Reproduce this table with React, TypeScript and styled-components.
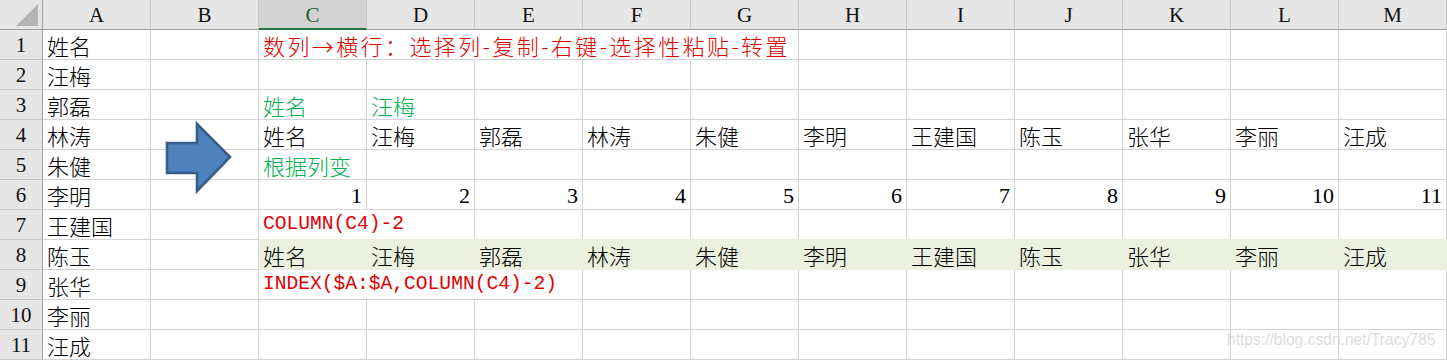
import React from "react";
import styled, { createGlobalStyle } from "styled-components";

const GlobalStyle = createGlobalStyle`
  html, body { margin: 0; padding: 0; background: #ffffff; }
  body { width: 1447px; height: 360px; overflow: hidden; }
`;

const CJK = `"Noto Sans CJK SC", "Noto Sans", sans-serif`;
const SERIF = `"Liberation Serif", "Noto Sans CJK SC", serif`;
const MONO = `"Liberation Mono", "Noto Sans CJK SC", monospace`;

const Sheet = styled.div`
  position: relative;
  display: grid;
  grid-template-columns: 43px repeat(13, 108px);
  grid-auto-rows: 30px;
  width: 1447px;
  height: 360px;
  overflow: hidden;
  background: #ffffff;
`;

const Corner = styled.div`
  box-sizing: border-box;
  background: #e6e6e6;
  border-right: 1px solid #9e9e9e;
  border-bottom: 1px solid #9e9e9e;
  display: flex;
  align-items: flex-end;
  justify-content: flex-end;
  padding: 0 3px 3px 0;
`;

const ColHeader = styled.div<{ $selected?: boolean }>`
  box-sizing: border-box;
  background: ${(p) => (p.$selected ? "#d2d2d2" : "#e6e6e6")};
  border-right: 1px solid #c6c6c6;
  border-bottom: ${(p) => (p.$selected ? "2px solid #217346" : "1px solid #9e9e9e")};
  color: ${(p) => (p.$selected ? "#1d5f3b" : "#111111")};
  font-family: ${SERIF};
  font-size: 21px;
  display: flex;
  align-items: center;
  justify-content: center;
  padding-top: ${(p) => (p.$selected ? "2px" : "1px")};
`;

const RowHeader = styled.div`
  box-sizing: border-box;
  background: #e6e6e6;
  border-right: 1px solid #9e9e9e;
  border-bottom: 1px solid #c6c6c6;
  color: #111111;
  font-family: ${SERIF};
  font-size: 21px;
  display: flex;
  align-items: center;
  justify-content: center;
  padding-top: 1px;
`;

type Tone = "black" | "red" | "green";
const toneColor: Record<Tone, string> = {
  black: "#000000",
  red: "#e00000",
  green: "#00b050",
};

const Cell = styled.div<{
  $tone: Tone;
  $mono?: boolean;
  $num?: boolean;
  $fill?: boolean;
  $span: number;
  $wide?: boolean;
}>`
  box-sizing: border-box;
  grid-column: span ${(p) => p.$span};
  border-right: 1px solid ${(p) => (p.$fill ? "#ebf1de" : "#d4d4d4")};
  border-bottom: 1px solid ${(p) => (p.$fill ? "#ebf1de" : "#d4d4d4")};
  background: ${(p) => (p.$fill ? "#ebf1de" : "transparent")};
  box-shadow: ${(p) => (p.$fill ? "0 -1px 0 #ebf1de" : "none")};
  color: ${(p) => toneColor[p.$tone]};
  font-family: ${(p) => (p.$mono ? MONO : p.$num ? SERIF : CJK)};
  font-size: ${(p) => (p.$mono ? "19.6px" : "22px")};
  font-weight: ${(p) => (p.$mono || p.$num ? 400 : 300)};
  letter-spacing: ${(p) => (p.$wide ? "2.4px" : "0")};
  white-space: nowrap;
  overflow: visible;
  display: flex;
  align-items: center;
  justify-content: ${(p) => (p.$num ? "flex-end" : "flex-start")};
  padding: ${(p) => (p.$num ? "2px 4px 0 0" : p.$mono ? "1px 0 0 4px" : "0 0 0 4px")};
  line-height: 1;
`;

const ArrowLayer = styled.svg`
  position: absolute;
  left: 160px;
  top: 118px;
  width: 80px;
  height: 80px;
  pointer-events: none;
`;

const Watermark = styled.div`
  position: absolute;
  left: 1227px;
  top: 331px;
  font-family: "Liberation Sans", Arial, sans-serif;
  font-size: 15.6px;
  color: rgba(205, 205, 205, 0.7);
  pointer-events: none;
  white-space: nowrap;
`;

type CellData = {
  text: string;
  tone?: Tone;
  mono?: boolean;
  num?: boolean;
  span?: number;
  wide?: boolean;
};

const COLS = ["A", "B", "C", "D", "E", "F", "G", "H", "I", "J", "K", "L", "M"];
const names = ["姓名", "汪梅", "郭磊", "林涛", "朱健", "李明", "王建国", "陈玉", "张华", "李丽", "汪成"];

type RowData = { cells: (CellData | null)[]; fill?: boolean };

const buildRows = (): RowData[] => {
  const rows: RowData[] = [];
  for (let r = 0; r < 11; r++) {
    const cells: (CellData | null)[] = new Array(13).fill(null);
    cells[0] = { text: names[r] };
    rows.push({ cells });
  }
  rows[0].cells[2] = {
    text: "数列→横行：选择列-复制-右键-选择性粘贴-转置",
    tone: "red",
    span: 5,
    wide: true,
  };
  rows[2].cells[2] = { text: "姓名", tone: "green" };
  rows[2].cells[3] = { text: "汪梅", tone: "green" };
  names.forEach((n, i) => {
    rows[3].cells[2 + i] = { text: n };
    rows[5].cells[2 + i] = { text: String(i + 1), num: true };
    rows[7].cells[2 + i] = { text: n };
  });
  rows[4].cells[2] = { text: "根据列变", tone: "green" };
  rows[6].cells[2] = { text: "COLUMN(C4)-2", tone: "red", mono: true, span: 2 };
  rows[7].fill = true;
  rows[8].cells[2] = { text: "INDEX($A:$A,COLUMN(C4)-2)", tone: "red", mono: true, span: 3 };
  return rows;
};

const rows = buildRows();

export default function App() {
  return (
    <>
      <GlobalStyle />
      <Sheet>
        <Corner>
          <svg width="23" height="22" viewBox="0 0 23 22">
            <polygon points="22,0 22,22 0,22" fill="#b4b4b4" />
          </svg>
        </Corner>
        {COLS.map((c) => (
          <ColHeader key={c} $selected={c === "C"}>
            {c}
          </ColHeader>
        ))}
        {rows.map((row, ri) => {
          const out: React.ReactNode[] = [
            <RowHeader key={`h${ri}`}>{ri + 1}</RowHeader>,
          ];
          let ci = 0;
          while (ci < 13) {
            const d = row.cells[ci];
            const span = d?.span ?? 1;
            out.push(
              <Cell
                key={`c${ri}-${ci}`}
                $tone={d?.tone ?? "black"}
                $mono={d?.mono}
                $num={d?.num}
                $wide={d?.wide}
                $fill={row.fill && ci >= 2}
                $span={span}
              >
                {d?.text ?? ""}
              </Cell>
            );
            ci += span;
          }
          return out;
        })}
        <ArrowLayer viewBox="0 0 80 80">
          <path
            d="M7 25 H37 V6 L70 39 L37 73 V55 H7 Z"
            fill="#4f81bd"
            stroke="#385d8a"
            strokeWidth="2.6"
            strokeLinejoin="miter"
          />
        </ArrowLayer>
        <Watermark>https://blog.csdn.net/Tracy785</Watermark>
      </Sheet>
    </>
  );
}
